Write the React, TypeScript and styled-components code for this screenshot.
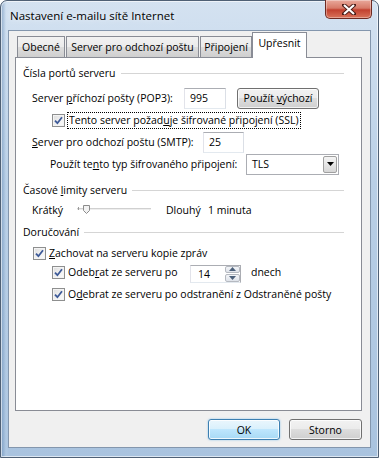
import React, { FC, ReactNode } from "react";
import styled, { createGlobalStyle, css } from "styled-components";

const FONT = `"Open Sans", "Noto Sans", sans-serif`;

const GlobalStyle = createGlobalStyle`
  html, body {
    margin: 0;
    padding: 0;
    background: #ffffff;
  }
  body {
    font-family: ${FONT};
    font-size: 10.5px;
    color: #000;
  }
`;

const Window = styled.div`
  box-sizing: border-box;
  width: 379px;
  height: 458px;
  display: flex;
  flex-direction: column;
  padding: 0 7px 9px 7px;
  border: 1px solid #4f6075;
  border-radius: 7px 7px 0 0;
  background: linear-gradient(
      90deg,
      rgba(90, 130, 175, 0.55) 0px,
      rgba(200, 220, 240, 0.2) 5px,
      rgba(255, 255, 255, 0) 8px
    ),
    linear-gradient(180deg, #d4e2f1 0%, #b9cfe6 40%, #a9c3df 100%);
  box-shadow: inset 0 0 0 1px rgba(255, 255, 255, 0.6);
`;

const TitleBar = styled.div`
  height: 29px;
  display: flex;
  align-items: flex-start;
  justify-content: space-between;
`;

const Title = styled.div`
  font-size: 11.5px;
  margin-top: 7px;
  margin-left: 2px;
  text-shadow: 0 0 6px rgba(255, 255, 255, 0.9);
`;

const CloseButton = styled.div`
  box-sizing: border-box;
  width: 47px;
  height: 19px;
  margin-top: -1px;
  margin-right: -1px;
  display: flex;
  align-items: center;
  justify-content: center;
  border: 1px solid #6e2a22;
  border-top: none;
  border-radius: 0 0 5px 5px;
  background: linear-gradient(180deg, #e9a99b 0%, #d77a68 45%, #c2412f 55%, #d9735a 100%);
  box-shadow: inset 0 0 0 1px rgba(255, 255, 255, 0.35);
`;

const Client = styled.div`
  flex: 1;
  display: flex;
  flex-direction: column;
  background: #f0f0f0;
  border: 1px solid #8396ad;
  padding: 2px 8px 0 6px;
`;

const TabStrip = styled.div`
  display: flex;
  align-items: flex-end;
  height: 24px;
  padding-left: 2px;
  position: relative;
  z-index: 1;
`;

const Tab = styled.div<{ $active?: boolean; $w: number }>`
  box-sizing: border-box;
  width: ${(p) => p.$w}px;
  height: 21px;
  margin-right: 1px;
  white-space: nowrap;
  display: flex;
  align-items: center;
  justify-content: center;
  border: 1px solid #898c95;
  border-bottom: none;
  background: linear-gradient(180deg, #f2f2f2 0%, #ebebeb 50%, #dddddd 51%, #cfcfcf 100%);
  ${(p) =>
    p.$active &&
    css`
      height: 26px;
      margin-bottom: -1px;
      margin-left: -1px;
      align-items: flex-start;
      padding-top: 3px;
      background: #ffffff;
    `}
`;

const Panel = styled.div`
  box-sizing: border-box;
  height: 354px;
  background: #ffffff;
  border: 1px solid #898c95;
  display: flex;
  flex-direction: column;
  padding-top: 7px;
`;

const GroupHead = styled.div<{ $top: number }>`
  display: flex;
  align-items: center;
  height: 16px;
  margin-top: ${(p) => p.$top}px;
  padding-left: 7px;
  padding-right: 17px;
  gap: 5px;
  white-space: nowrap;
  &::after {
    content: "";
    flex: 1;
    height: 1px;
    background: #d5d5d5;
  }
`;

const Row = styled.div<{ $top: number; $indent: number; $h?: number }>`
  display: flex;
  align-items: center;
  height: ${(p) => p.$h ?? 22}px;
  margin-top: ${(p) => p.$top}px;
  padding-left: ${(p) => p.$indent}px;
  white-space: nowrap;
`;

const Label = styled.span<{ $w?: number; $ml?: number }>`
  display: inline-block;
  flex: none;
  ${(p) => p.$w !== undefined && `width: ${p.$w}px;`}
  ${(p) => p.$ml !== undefined && `margin-left: ${p.$ml}px;`}
`;

const CheckLabel = styled.span<{ $w?: number }>`
  display: inline-flex;
  align-items: center;
  flex: none;
  ${(p) => p.$w !== undefined && `width: ${p.$w}px;`}
`;

const Key = styled.span`
  text-decoration: underline;
  text-underline-offset: 1px;
`;

const Focus = styled.span`
  outline: 1px dotted #000;
  outline-offset: 0px;
  padding: 0 1px 1px 1px;
  line-height: 14px;
`;

const TextBox = styled.div<{ $w: number }>`
  box-sizing: border-box;
  width: ${(p) => p.$w}px;
  height: 21px;
  flex: none;
  display: flex;
  align-items: center;
  padding-left: 5px;
  background: #fff;
  border: 1px solid #abadb3;
  border-left-color: #e2e3ea;
  border-right-color: #dbdfe6;
  border-bottom-color: #e3e9ef;
`;

const PushButton = styled.div<{ $w: number; $default?: boolean; $ml?: number }>`
  box-sizing: border-box;
  width: ${(p) => p.$w}px;
  height: 21px;
  flex: none;
  margin-left: ${(p) => p.$ml ?? 0}px;
  display: flex;
  align-items: center;
  justify-content: center;
  white-space: nowrap;
  border: 1px solid #707070;
  border-radius: 3px;
  background: linear-gradient(180deg, #f2f2f2 0%, #ebebeb 49%, #dddddd 50%, #cfcfcf 100%);
  box-shadow: inset 0 0 0 1px rgba(255, 255, 255, 0.75);
  ${(p) =>
    p.$default &&
    css`
      border-color: #3c7fb1;
      background: linear-gradient(180deg, #eaf6fd 0%, #d9f0fc 49%, #bee6fd 50%, #a7d9f5 100%);
      box-shadow: inset 0 0 0 1px rgba(255, 255, 255, 0.8), 0 0 2px rgba(60, 160, 230, 0.6);
    `}
`;

const Combo = styled.div`
  box-sizing: border-box;
  width: 93px;
  height: 21px;
  flex: none;
  display: flex;
  align-items: center;
  justify-content: space-between;
  padding: 0 1px 0 5px;
  background: #fff;
  border: 1px solid #abadb3;
`;

const ComboButton = styled.div`
  box-sizing: border-box;
  width: 14px;
  height: 17px;
  display: flex;
  align-items: center;
  justify-content: center;
  border: 1px solid #a0a0a0;
  border-radius: 2px;
  background: linear-gradient(180deg, #f4f4f4 0%, #e6e6e6 50%, #d6d6d6 100%);
`;

const Spin = styled.div`
  box-sizing: border-box;
  width: 51px;
  height: 18px;
  flex: none;
  display: flex;
  align-items: stretch;
  justify-content: space-between;
  background: #fff;
  border: 1px solid #abadb3;
  border-left-color: #e2e3ea;
  border-bottom-color: #e3e9ef;
  padding: 0 0 0 7px;
  margin-top: 3px;
`;

const SpinValue = styled.span`
  display: flex;
  align-items: center;
  padding-top: 1px;
`;

const SpinArrows = styled.div`
  width: 15px;
  display: flex;
  flex-direction: column;
  gap: 1px;
`;

const SpinPart = styled.div`
  flex: 1;
  display: flex;
  align-items: center;
  justify-content: center;
  border: 1px solid #b5b9c0;
  border-radius: 2px;
  background: linear-gradient(180deg, #f3f5f8 0%, #dfe3ea 100%);
`;

const Box = styled.span`
  box-sizing: border-box;
  width: 13px;
  height: 13px;
  flex: none;
  margin-right: 3px;
  display: inline-flex;
  align-items: center;
  justify-content: center;
  border: 1px solid #8e8f8f;
  background: linear-gradient(135deg, #dcdcdc 0%, #f3f3f3 60%, #fbfbfb 100%);
  box-shadow: inset 0 0 0 1px #f4f4f4;
`;

const Slider = styled.div`
  position: relative;
  width: 74px;
  height: 18px;
  flex: none;
`;

const Track = styled.div`
  position: absolute;
  left: 0;
  right: 0;
  top: 7px;
  height: 1px;
  background: #d0d0d0;
  border-bottom: 1px solid #eeeeee;
`;

const Tick = styled.div`
  position: absolute;
  left: 1px;
  top: 6px;
  width: 1px;
  height: 3px;
  background: #9a9a9a;
`;

const Thumb = styled.svg`
  position: absolute;
  left: 6px;
  top: 4px;
`;

const Footer = styled.div`
  display: flex;
  justify-content: flex-end;
  gap: 9px;
  margin-top: 8px;
`;

const Check: FC<{ children: ReactNode; w?: number }> = ({ children, w }) => (
  <CheckLabel $w={w}>
    <Box>
      <svg width="9" height="9" viewBox="0 0 9 9">
        <path d="M1 4.6 L3.4 7.2 L8 1.2" fill="none" stroke="#3d5a98" strokeWidth="1.8" />
      </svg>
    </Box>
    <span>{children}</span>
  </CheckLabel>
);

const Arrow: FC<{ up?: boolean }> = ({ up }) => (
  <svg width="7" height="4" viewBox="0 0 7 4">
    <path d={up ? "M0 4 L3.5 0 L7 4 Z" : "M0 0 L3.5 4 L7 0 Z"} fill="#4c607a" />
  </svg>
);

const App: FC = () => {
  return (
    <>
      <GlobalStyle />
      <Window>
        <TitleBar>
          <Title>Nastavení e-mailu sítě Internet</Title>
          <CloseButton>
            <svg width="14" height="11" viewBox="0 0 14 11">
              <path
                d="M2 1 L12 10 M12 1 L2 10"
                stroke="#4a1d18"
                strokeWidth="4"
                strokeLinecap="square"
              />
              <path d="M2 1 L12 10 M12 1 L2 10" stroke="#ffffff" strokeWidth="2.2" />
            </svg>
          </CloseButton>
        </TitleBar>
        <Client>
          <TabStrip>
            <Tab $w={48}>Obecné</Tab>
            <Tab $w={133}>Server pro odchozí poštu</Tab>
            <Tab $w={52}>Připojení</Tab>
            <Tab $w={55} $active>
              Upřesnit
            </Tab>
          </TabStrip>
          <Panel>
            <GroupHead $top={0}>Čísla portů serveru</GroupHead>
            <Row $top={6} $indent={16}>
              <Label $w={152}>
                Server <Key>p</Key>říchozí pošty (POP3):
              </Label>
              <TextBox $w={42}>995</TextBox>
              <PushButton $w={82} $ml={11}>
                Použít&nbsp;<Key>v</Key>ýchozí
              </PushButton>
            </Row>
            <Row $top={0} $indent={36}>
              <Check>
                <Focus>
                  Tento server požad<Key>u</Key>je šifrované připojení (SSL)
                </Focus>
              </Check>
            </Row>
            <Row $top={0} $indent={16}>
              <Label $w={171}>
                <Key>S</Key>erver pro odchozí poštu (SMTP):
              </Label>
              <TextBox $w={41}>25</TextBox>
            </Row>
            <Row $top={0} $indent={34}>
              <Label $w={196}>
                Použít te<Key>n</Key>to typ šifrovaného připojení:
              </Label>
              <Combo>
                TLS
                <ComboButton>
                  <svg width="7" height="4" viewBox="0 0 7 4">
                    <path d="M0 0 L3.5 4 L7 0 Z" fill="#000" />
                  </svg>
                </ComboButton>
              </Combo>
            </Row>
            <GroupHead $top={7}>
              <span>
                Časové <Key>l</Key>imity serveru
              </span>
            </GroupHead>
            <Row $top={3} $indent={16} $h={18}>
              <Label $w={45}>Krátký</Label>
              <Slider>
                <Track />
                <Tick />
                <Thumb width="7" height="9" viewBox="0 0 7 9">
                  <path
                    d="M0.5 0.5 H6.5 V5.5 L3.5 8.5 L0.5 5.5 Z"
                    fill="#f2f2f2"
                    stroke="#8c8c8c"
                  />
                </Thumb>
              </Slider>
              <Label $w={42} $ml={15}>
                Dlouhý
              </Label>
              <Label>1 minuta</Label>
            </Row>
            <GroupHead $top={5}>Doručování</GroupHead>
            <Row $top={4} $indent={17} $h={18}>
              <Check>
                <Key>Z</Key>achovat na serveru kopie zpráv
              </Check>
            </Row>
            <Row $top={0} $indent={36} $h={20}>
              <Check w={138}>
                Odeb<Key>r</Key>at ze serveru po
              </Check>
              <Spin>
                <SpinValue>14</SpinValue>
                <SpinArrows>
                  <SpinPart>
                    <Arrow up />
                  </SpinPart>
                  <SpinPart>
                    <Arrow />
                  </SpinPart>
                </SpinArrows>
              </Spin>
              <Label $ml={10}>dnech</Label>
            </Row>
            <Row $top={1} $indent={36}>
              <Check>
                O<Key>d</Key>ebrat ze serveru po odstranění z Odstraněné pošty
              </Check>
            </Row>
          </Panel>
          <Footer>
            <PushButton $w={72} $default>
              OK
            </PushButton>
            <PushButton $w={73}>Storno</PushButton>
          </Footer>
        </Client>
      </Window>
    </>
  );
};

export default App;
